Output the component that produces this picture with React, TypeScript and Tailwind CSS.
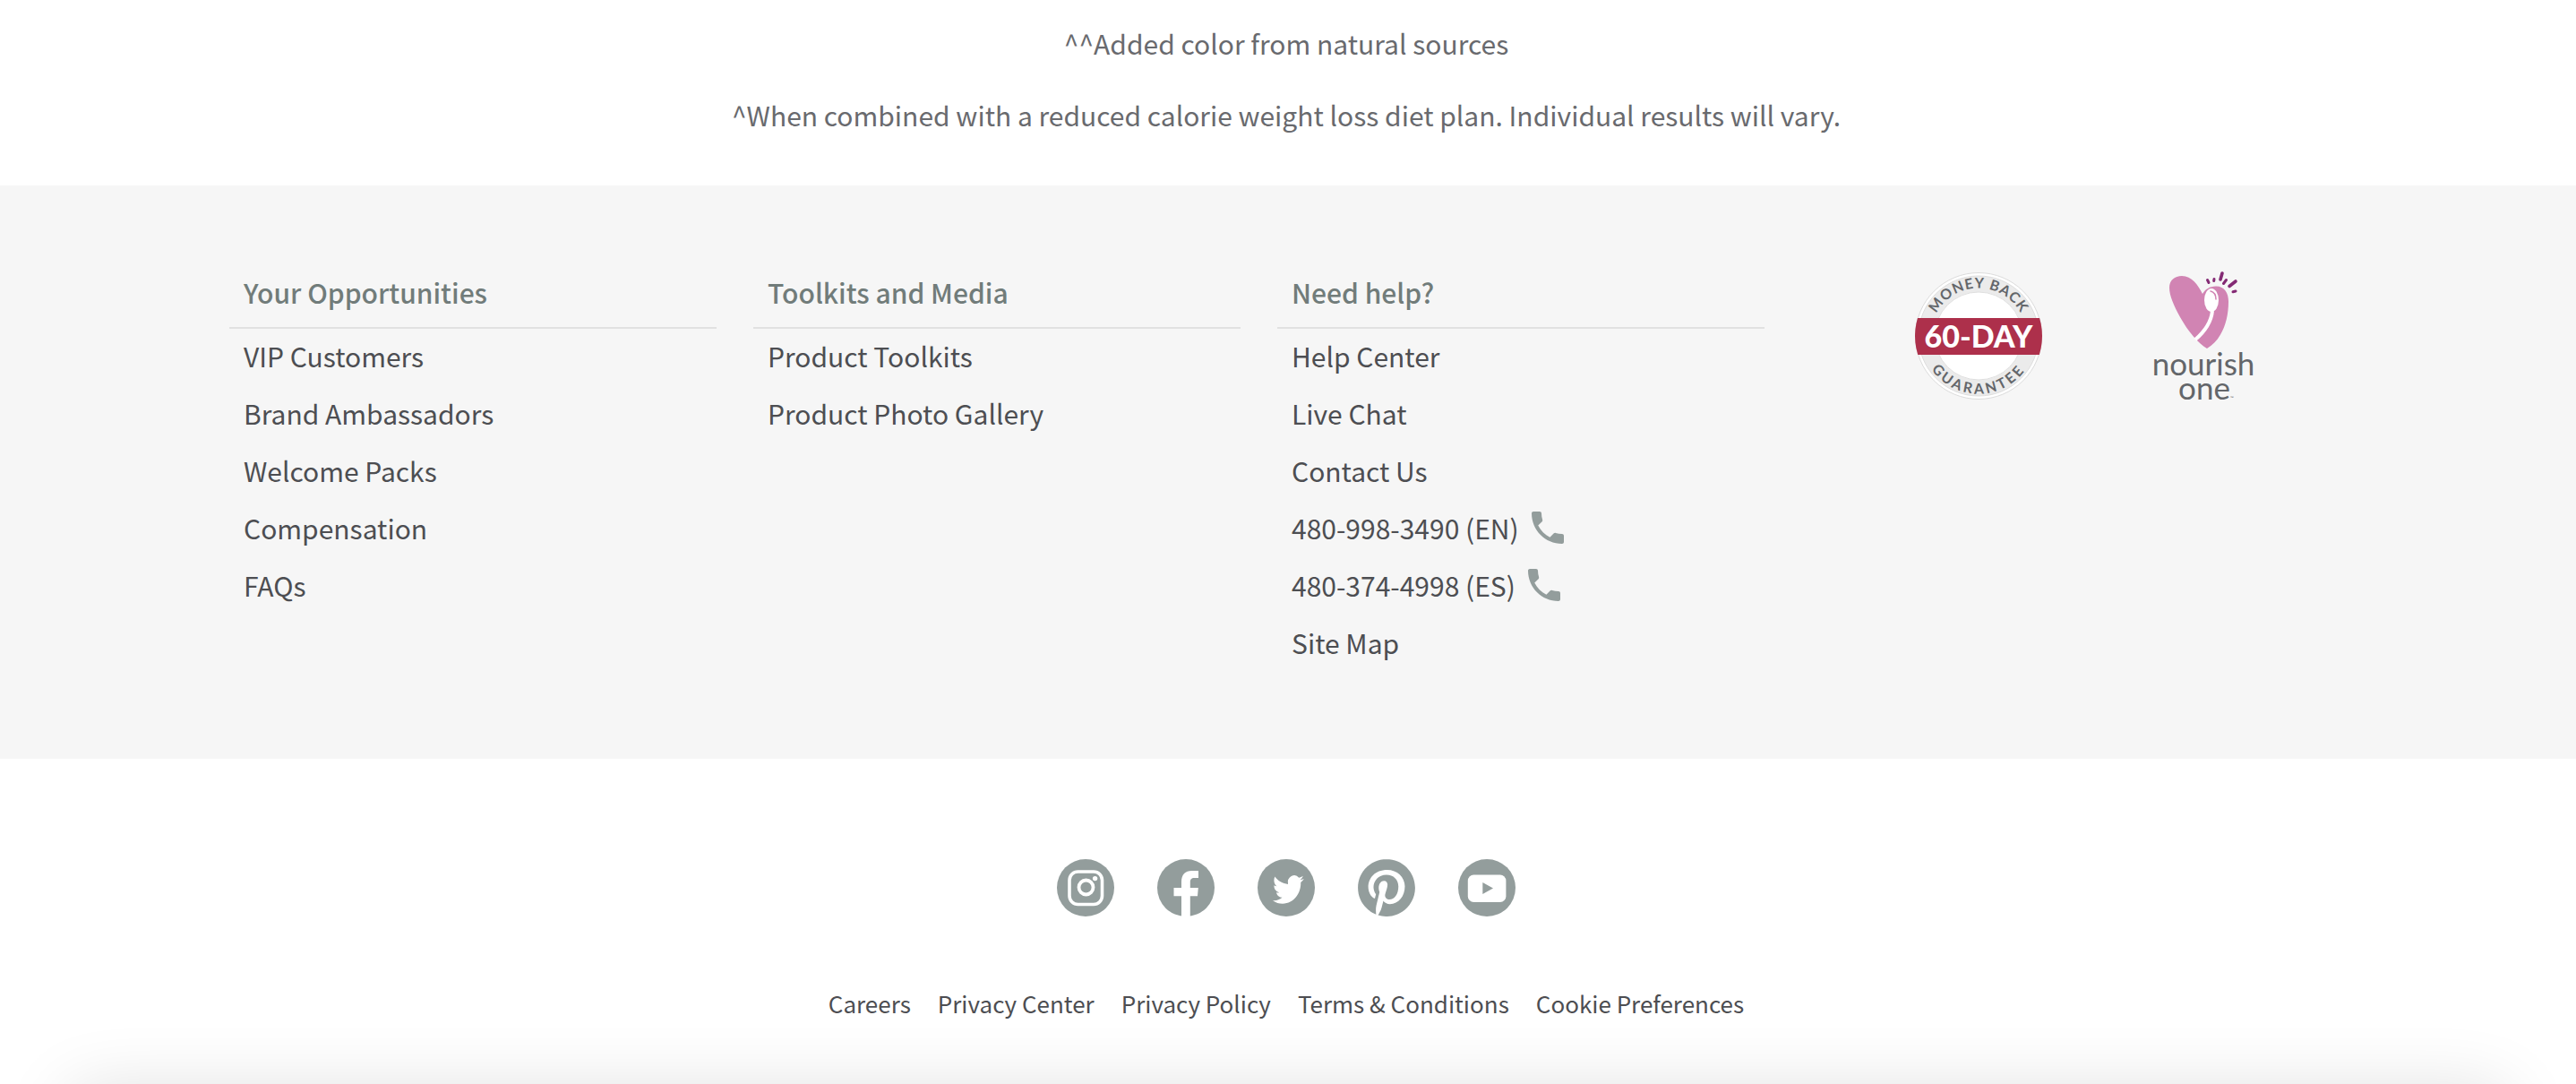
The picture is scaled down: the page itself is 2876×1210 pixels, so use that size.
import type { ReactNode } from "react";
import { MdPhone } from "react-icons/md";

const columns = [
  {
    title: "Your Opportunities",
    links: [
      { label: "VIP Customers" },
      { label: "Brand Ambassadors" },
      { label: "Welcome Packs" },
      { label: "Compensation" },
      { label: "FAQs" },
    ],
  },
  {
    title: "Toolkits and Media",
    links: [{ label: "Product Toolkits" }, { label: "Product Photo Gallery" }],
  },
  {
    title: "Need help?",
    links: [
      { label: "Help Center" },
      { label: "Live Chat" },
      { label: "Contact Us" },
      { label: "480-998-3490 (EN)", href: "tel:4809983490" },
      { label: "480-374-4998 (ES)", href: "tel:4803744998" },
      { label: "Site Map" },
    ],
  },
];

const legalLinks = ["Careers", "Privacy Center", "Privacy Policy", "Terms & Conditions", "Cookie Preferences"];

const socials: { name: string; icon: ReactNode }[] = [
  {
    name: "Instagram",
    icon: (
      <>
        <circle cx="32" cy="32" r="32" fill="#939d9c" />
        <rect x="14" y="14" width="36.5" height="36.5" rx="9.5" fill="none" stroke="#fff" strokeWidth="3.6" />
        <circle cx="32.5" cy="31.5" r="8" fill="none" stroke="#fff" strokeWidth="3.8" />
        <circle cx="42.6" cy="21.6" r="2.7" fill="#fff" />
      </>
    ),
  },
  {
    name: "Facebook",
    icon: (
      <>
        <circle cx="32" cy="32" r="32" fill="#939d9c" />
        <path fill="#fff" d="M27 64V41.3h-8.5V32H27v-6.5C27 17 31.5 13 38.5 13H46v8h-4.5C38 21 36.800 22.5 36.800 26v6h9L45 41.3h-8.200V64z" />
      </>
    ),
  },
  {
    name: "Twitter",
    icon: (
      <>
        <circle cx="32" cy="32" r="32" fill="#939d9c" />
        <path
          fill="#fff"
          transform="translate(17 14.5) scale(1.45 1.62)"
          d="M23.953 4.57a10 10 0 01-2.825.775 4.958 4.958 0 002.163-2.723c-.951.555-2.005.959-3.127 1.184a4.92 4.92 0 00-8.384 4.482C7.69 8.095 4.067 6.13 1.64 3.162a4.822 4.822 0 00-.666 2.475c0 1.71.87 3.213 2.188 4.096a4.904 4.904 0 01-2.228-.616v.06a4.923 4.923 0 003.946 4.827 4.996 4.996 0 01-2.212.085 4.936 4.936 0 004.604 3.417 9.867 9.867 0 01-6.102 2.105c-.39 0-.779-.023-1.17-.067a13.995 13.995 0 007.557 2.209c9.053 0 13.998-7.496 13.998-13.985 0-.21 0-.42-.015-.63A9.935 9.935 0 0024 4.59z"
        />
      </>
    ),
  },
  {
    name: "Pinterest",
    icon: (
      <path
        fill="#939d9c"
        transform="scale(2.667)"
        d="M12.017 0C5.396 0 .029 5.367.029 11.987c0 5.079 3.158 9.417 7.618 11.162-.105-.949-.199-2.403.041-3.439.219-.937 1.406-5.957 1.406-5.957s-.359-.72-.359-1.781c0-1.663.967-2.911 2.168-2.911 1.024 0 1.518.769 1.518 1.688 0 1.029-.653 2.567-.992 3.992-.285 1.193.6 2.165 1.775 2.165 2.128 0 3.768-2.245 3.768-5.487 0-2.861-2.063-4.869-5.008-4.869-3.41 0-5.409 2.562-5.409 5.199 0 1.033.394 2.143.889 2.741.099.12.112.225.085.345-.09.375-.293 1.199-.334 1.363-.053.225-.172.271-.401.165-1.495-.69-2.433-2.878-2.433-4.646 0-3.776 2.748-7.252 7.92-7.252 4.158 0 7.392 2.967 7.392 6.923 0 4.135-2.607 7.462-6.233 7.462-1.214 0-2.354-.629-2.758-1.379l-.749 2.848c-.269 1.045-1.004 2.352-1.498 3.146 1.123.345 2.306.535 3.55.535 6.607 0 11.985-5.365 11.985-11.987C23.97 5.39 18.592.026 11.985.026L12.017 0z"
      />
    ),
  },
  {
    name: "YouTube",
    icon: (
      <>
        <circle cx="32" cy="32" r="32" fill="#939d9c" />
        <rect x="10.8" y="17.5" width="42.6" height="30.5" rx="6.5" fill="#fff" />
        <path d="M27.3 26l11.7 6.5-11.7 6.5z" fill="#939d9c" />
      </>
    ),
  },
];

const GuaranteeBadge = () => (
  <svg className="h-36 w-36" viewBox="0 0 144 144" role="img" aria-label="60-day money back guarantee">
    <defs>
      <path id="arc-top" d="M18.5 72a53.5 53.5 0 0 1 107 0" />
      <path id="arc-bottom" d="M7.5 72a64.5 64.5 0 0 0 129 0" />
      <clipPath id="badge-clip">
        <circle cx="72" cy="72" r="71" />
      </clipPath>
    </defs>
    <circle cx="72" cy="72" r="70.5" fill="#fff" stroke="#dcdcdc" />
    <circle cx="72" cy="72" r="58" fill="none" stroke="#ebebeb" strokeWidth="18" />
    <circle cx="72" cy="72" r="67" fill="none" stroke="#dfdfdf" />
    <circle cx="72" cy="72" r="49" fill="none" stroke="#dfdfdf" />
    <rect y="52" width="144" height="41" fill="#ad304b" clipPath="url(#badge-clip)" />
    <g fontFamily="Lato, sans-serif" fontWeight="700" fontSize="16" fill="#63666a" textAnchor="middle">
      <text letterSpacing="1">
        <textPath href="#arc-top" startOffset="50%">MONEY BACK</textPath>
      </text>
      <text letterSpacing="3">
        <textPath href="#arc-bottom" startOffset="50%">GUARANTEE</textPath>
      </text>
    </g>
    <text x="72" y="85" fontFamily="Lato, sans-serif" fontWeight="900" fontSize="34" fill="#fff" textAnchor="middle">
      60-DAY
    </text>
  </svg>
);

const NourishOneLogo = () => (
  <svg className="h-36 w-36 overflow-visible" viewBox="0 0 144 144" role="img" aria-label="nourish one">
    <path
      fill="#d184b3"
      d="M76 86C66 80 55 67 46 51 39 38 34 27 34 18 34 10 40 5 48 5c11 0 18 10 23 20 3-5 8-8.5 15-8.5 10 0 14 8 14 17 0 14-3 27-9 37-4 7-9 12-15 15.5z"
    />
    <ellipse cx="81" cy="32" rx="8" ry="13" fill="#fff" />
    <path fill="none" stroke="#fff" strokeWidth="4" d="M82 44C81 54 77 64 63 76" />
    <path fill="none" stroke="#d184b3" strokeWidth="1.5" strokeLinecap="round" d="M80 22c4 1 6 4 6 9" />
    <g stroke="#842a74" strokeLinecap="round">
      <path strokeWidth="3" d="M76.5 9.5l1.5 3M84 8.5l-.3 2M97.5 9.5l-3 4M108 22l-3 .8" />
      <path strokeWidth="3.6" d="M93 2l-2 7M108 11l-7 5.5" />
    </g>
    <g fontFamily="Lato, sans-serif" fontSize="35" fill="#63666a" textAnchor="middle">
      <text x="72" y="116">nourish</text>
      <text x="73" y="143">one</text>
    </g>
    <text x="102" y="143" fontFamily="Lato, sans-serif" fontSize="5" fill="#63666a">
      ™
    </text>
  </svg>
);

const App = () => {
  return (
    <div className="overflow-hidden bg-white font-['Noto_Sans_CJK_SC',sans-serif] text-[30px] text-[#4d4e52]">
      {/* Disclaimers */}
      <section className="flex flex-col gap-10 pt-7 pr-1 pb-[59px] text-center leading-10 text-[#696a6e]">
        <p>^^Added color from natural sources</p>
        <p>^When combined with a reduced calorie weight loss diet plan. Individual results will vary.</p>
      </section>

      <footer>
        {/* Link columns */}
        <div className="bg-[#f6f6f6] py-24 pr-1">
          <div className="mx-auto grid max-w-[2400px] grid-cols-[1fr_1fr_1fr_605px] gap-x-[41px] px-5">
            {columns.map((column) => (
              <nav key={column.title} aria-label={column.title}>
                <h2 className="border-b-2 border-[#e1e1e1] px-4 pb-4 leading-[46px] font-medium text-[#717c7a]">
                  {column.title}
                </h2>
                <ul className="px-4">
                  {column.links.map((link) => (
                    <li key={link.label} className="flex h-16">
                      <a href={"href" in link ? link.href : "#"} className="flex items-center gap-2 pb-1">
                        {link.label}
                        {"href" in link && <MdPhone className="size-12 text-[#939d9c]" />}
                      </a>
                    </li>
                  ))}
                </ul>
              </nav>
            ))}
            <div className="flex gap-[107px] pl-[126px]">
              <GuaranteeBadge />
              <NourishOneLogo />
            </div>
          </div>
        </div>

        {/* Social */}
        <div className="flex justify-center gap-12 pt-28 pr-1">
          {socials.map((social) => (
            <a key={social.name} href="#" aria-label={social.name}>
              <svg className="size-16" viewBox="0 0 64 64">
                {social.icon}
              </svg>
            </a>
          ))}
        </div>

        {/* Legal */}
        <ul className="flex flex-wrap justify-center gap-x-[30px] pt-20 pr-1 text-[26px] leading-[34px]">
          {legalLinks.map((label) => (
            <li key={label}>
              <a href="#">{label}</a>
            </li>
          ))}
        </ul>

        {/* Shadow cast by the bottom bar that sits just below the fold */}
        <div className="h-[73px] px-20 pt-[83px]">
          <div className="h-40 shadow-[0_0_80px_rgba(0,0,0,0.14)]" />
        </div>
      </footer>
    </div>
  );
};

export default App;
